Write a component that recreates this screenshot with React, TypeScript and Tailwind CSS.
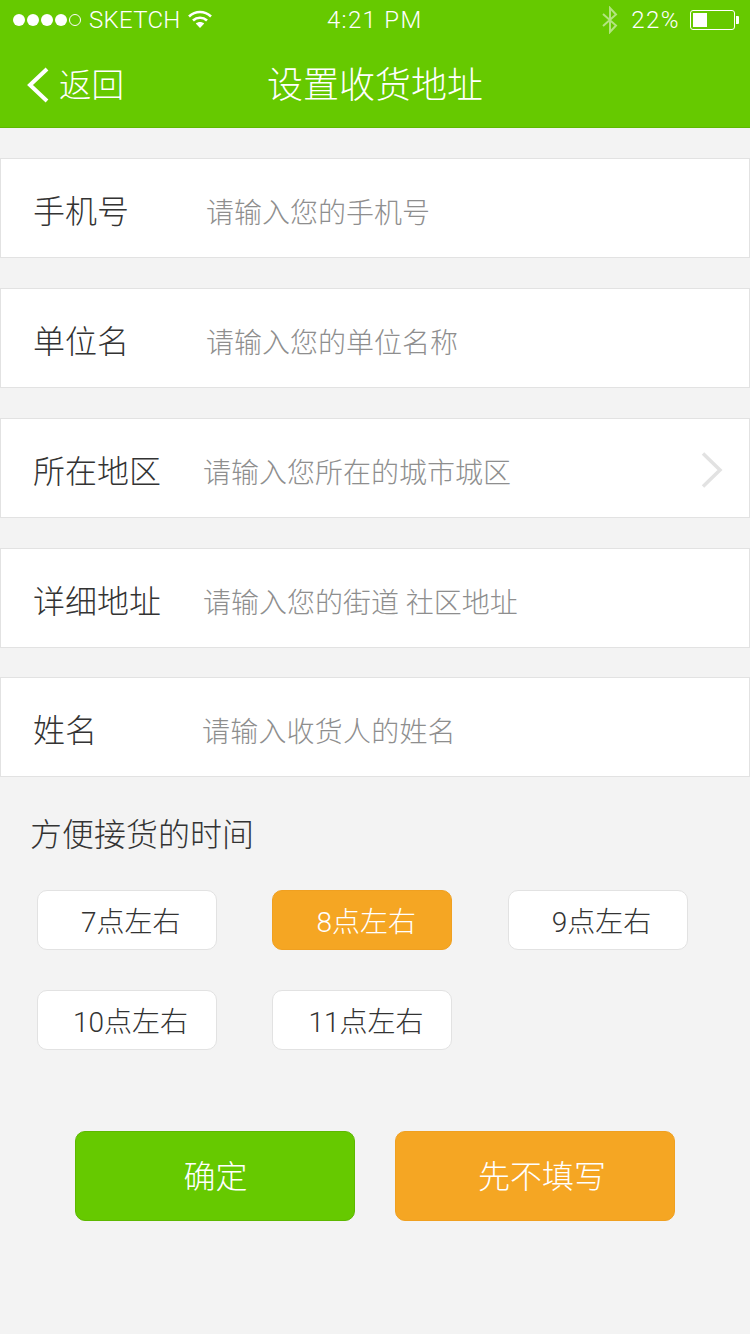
const cjk = "font-['Roboto','Noto_Sans_CJK_SC',sans-serif]"

const rows = [
  { label: '手机号', hint: '请输入您的手机号', gap: 'ml-[77px]', mt: 'mt-[30px]' },
  { label: '单位名', hint: '请输入您的单位名称', gap: 'ml-[77px]', mt: 'mt-[30px]' },
  { label: '所在地区', hint: '请输入您所在的城市城区', gap: 'ml-[42px]', mt: 'mt-[30px]', arrow: true },
  { label: '详细地址', hint: '请输入您的街道 社区地址', gap: 'ml-[42px]', mt: 'mt-[30px]' },
  { label: '姓名', hint: '请输入收货人的姓名', gap: 'ml-[105px] tracking-[0.2px]', mt: 'mt-[29px]' },
]

function StatusBar() {
  return (
    <div className="flex h-10 items-center pl-[13px] pr-[11px] text-white">
      <div className="flex w-[314px] items-center">
        <div className="flex gap-[2px]">
          <span className="size-[12px] rounded-full bg-white" />
          <span className="size-[12px] rounded-full bg-white" />
          <span className="size-[12px] rounded-full bg-white" />
          <span className="size-[12px] rounded-full bg-white" />
          <span className="size-[12px] rounded-full border border-white" />
        </div>
        <span className="ml-[8px] text-[24px] leading-none font-light tracking-[0.3px]">SKETCH</span>
        <svg className="mb-[2px] ml-[7px]" width="24" height="20" viewBox="0 0 24 20" fill="none" stroke="white" strokeWidth="2.6">
          <path d="M1 7.5C7.5 1.5 16.500 1.500 23 7.500" />
          <path d="M5 11.500C9 7.800 15 7.800 19 11.500" />
          <path d="M12 19L7.800 14.600C10.300 12.600 13.700 12.600 16.200 14.600Z" fill="white" stroke="none" />
        </svg>
      </div>
      <span className="text-[24px] leading-none font-light tracking-[1.300px]">4:21 PM</span>
      <svg className="ml-auto opacity-50" width="18" height="28" viewBox="0 0 18 28" fill="none" stroke="white" strokeWidth="2">
        <path d="M2 8L15 19.500L9 26V2L15 8.500L2 20" />
      </svg>
      <span className="ml-[12px] text-[24px] leading-none font-light tracking-[1.500px]">22%</span>
      <div className="ml-[10px] flex items-center">
        <div className="flex h-[20px] w-[45px] rounded-[3px] border border-white p-[2px]">
          <span className="w-[14px] bg-white" />
        </div>
        <span className="ml-[1px] h-[8px] w-[3px] rounded-r-[1px] bg-white" />
      </div>
    </div>
  )
}

function FormRow({ label, hint, gap, mt, arrow }: { label: string; hint: string; gap: string; mt: string; arrow?: boolean }) {
  return (
    <div className={`${mt} flex h-[100px] items-center border border-[#e2e2e2] bg-white pt-[8px] pr-[26px] pl-[32px]`}>
      <span className="text-[32px] leading-none font-light text-[#333]">{label}</span>
      <span className={`${gap} mt-[3px] text-[28px] leading-none font-light text-[#8e8e8e]`}>{hint}</span>
      {arrow && (
        <svg className="mb-[4px] ml-auto" width="22" height="36" viewBox="0 0 22 36" fill="none" stroke="#e2e2e2" strokeWidth="3.500">
          <path d="M2 1.500L19 18L2 34.500" />
        </svg>
      )}
    </div>
  )
}

function TimeChip({ text, active, indent }: { text: string; active?: boolean; indent: string }) {
  return (
    <div
      className={`flex h-[60px] w-[180px] items-center rounded-[10px] border pt-[6px] text-[28px] leading-none font-light ${indent} ${
        active ? 'border-[#f0a020] bg-[#f5a623] text-white' : 'border-[#e2e2e2] bg-white text-[#333]'
      }`}
    >
      {text}
    </div>
  )
}

export default function App() {
  return (
    <div className={`${cjk} min-h-[1334px] w-[750px] bg-[#f3f3f3]`}>
      {/* 顶部导航 */}
      <div className="h-[128px] border-b border-[#5eb800] bg-[#66c900]">
        <StatusBar />
        <div className="relative flex h-[87px] items-center justify-center text-white">
          <div className="absolute top-[27px] left-[27px] flex items-center">
            <svg width="22" height="36" viewBox="0 0 22 36" fill="none" stroke="white" strokeWidth="4">
              <path d="M20 2L3 18L20 34" />
            </svg>
            <span className="mt-[2px] ml-[10px] text-[32.500px] leading-none font-light">返回</span>
          </div>
          <span className="pt-[4px] text-[36px] leading-none font-light">设置收货地址</span>
        </div>
      </div>

      {/* 表单 */}
      {rows.map((row) => (
        <FormRow key={row.label} {...row} />
      ))}

      {/* 接货时间 */}
      <p className="mt-[42px] pl-[30px] text-[32px] leading-none font-light text-[#333]">方便接货的时间</p>
      <div className="mt-[39px] grid grid-cols-[180px_180px_180px] gap-x-[55.400px] gap-y-[40px] pl-[37px]">
        <TimeChip text="7点左右" indent="pl-[43px]" />
        <TimeChip text="8点左右" active indent="pl-[43px]" />
        <TimeChip text="9点左右" indent="pl-[43px]" />
        <TimeChip text="10点左右" indent="pl-[35px]" />
        <TimeChip text="11点左右" indent="pl-[35px]" />
      </div>

      {/* 底部按钮 */}
      <div className="mt-[81px] flex gap-[40px] pl-[75px]">
        <button className="h-[90px] w-[280px] rounded-[10px] border border-[#5db800] bg-[#66c900] pt-[2px] pl-[1px] text-[32px] font-light text-white">确定</button>
        <button className="h-[90px] w-[280px] rounded-[10px] border border-[#f0a020] bg-[#f5a623] pt-[2px] pl-[14px] text-[32px] font-light text-white">先不填写</button>
      </div>
    </div>
  )
}
